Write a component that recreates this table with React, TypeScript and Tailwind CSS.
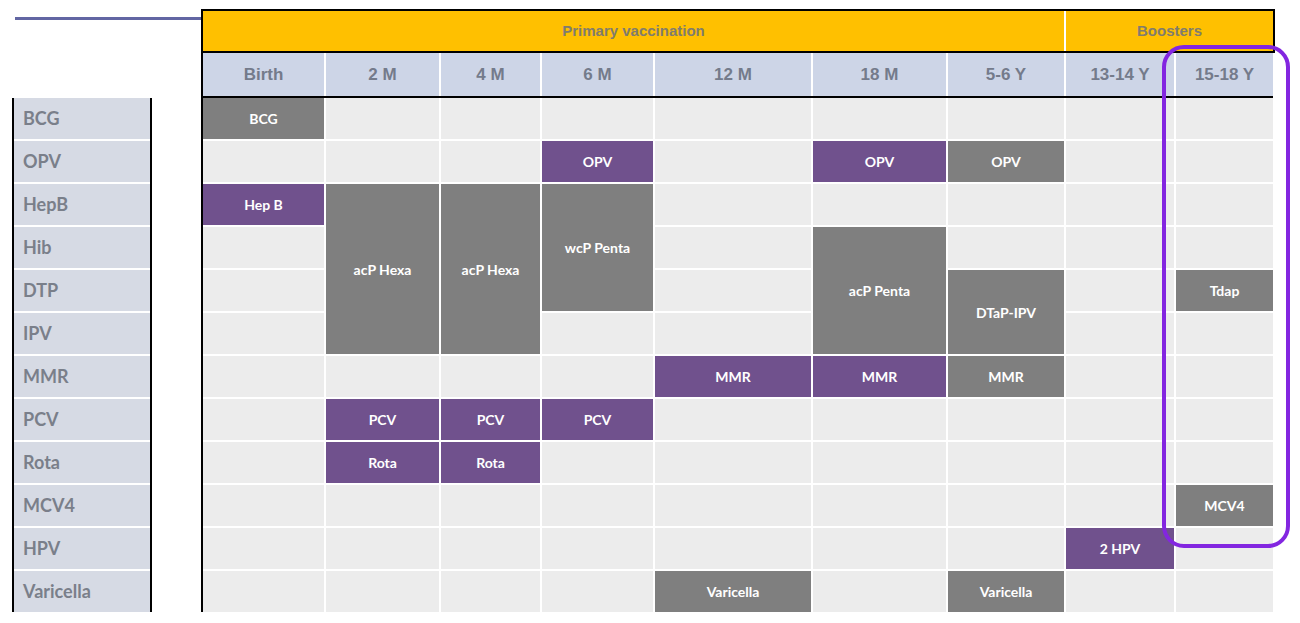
import React from 'react';

const columns = ['Birth', '2 M', '4 M', '6 M', '12 M', '18 M', '5-6 Y', '13-14 Y', '15-18 Y'];
const vaccines = ['BCG', 'OPV', 'HepB', 'Hib', 'DTP', 'IPV', 'MMR', 'PCV', 'Rota', 'MCV4', 'HPV', 'Varicella'];

const colStart = [
  'col-start-1', 'col-start-2', 'col-start-3', 'col-start-4', 'col-start-5',
  'col-start-6', 'col-start-7', 'col-start-8', 'col-start-9',
];
const rowStart = [
  'row-start-1', 'row-start-2', 'row-start-3', 'row-start-4', 'row-start-5', 'row-start-6',
  'row-start-7', 'row-start-8', 'row-start-9', 'row-start-10', 'row-start-11', 'row-start-12',
];

type Dose = { col: number; row: number; span?: string; label: string; purple?: boolean };

const doses: Dose[] = [
  { col: 1, row: 1, label: 'BCG' },
  { col: 4, row: 2, label: 'OPV', purple: true },
  { col: 6, row: 2, label: 'OPV', purple: true },
  { col: 7, row: 2, label: 'OPV' },
  { col: 1, row: 3, label: 'Hep B', purple: true },
  { col: 2, row: 3, span: 'row-span-4', label: 'acP Hexa' },
  { col: 3, row: 3, span: 'row-span-4', label: 'acP Hexa' },
  { col: 4, row: 3, span: 'row-span-3', label: 'wcP Penta' },
  { col: 6, row: 4, span: 'row-span-3', label: 'acP Penta' },
  { col: 7, row: 5, span: 'row-span-2', label: 'DTaP-IPV' },
  { col: 9, row: 5, label: 'Tdap' },
  { col: 5, row: 7, label: 'MMR', purple: true },
  { col: 6, row: 7, label: 'MMR', purple: true },
  { col: 7, row: 7, label: 'MMR' },
  { col: 2, row: 8, label: 'PCV', purple: true },
  { col: 3, row: 8, label: 'PCV', purple: true },
  { col: 4, row: 8, label: 'PCV', purple: true },
  { col: 2, row: 9, label: 'Rota', purple: true },
  { col: 3, row: 9, label: 'Rota', purple: true },
  { col: 9, row: 10, label: 'MCV4' },
  { col: 8, row: 11, label: '2 HPV', purple: true },
  { col: 5, row: 12, label: 'Varicella' },
  { col: 7, row: 12, label: 'Varicella' },
];

const cols = 'grid-cols-[121px_113px_99px_111px_156px_133px_116px_108px_97px]';

export default function App() {
  return (
    <div className="relative w-[1300px] h-[623px] bg-white flex pt-[9px] overflow-hidden">
      {/* left: rule + vaccine labels */}
      <div className="w-[201px] shrink-0 flex flex-col">
        <div className="mt-[8px] ml-[15px] h-[3px] bg-[#6266a3]" />
        <div className="mt-[78px] ml-[12px] w-[140px] border-x-2 border-black grid grid-rows-[repeat(12,41px)] gap-y-[2px] bg-white">
          {vaccines.map((v) => (
            <div
              key={v}
              className="bg-[#d6dae4] flex items-center pl-[9px] text-[18px] font-bold text-[#7a7f8a] font-['Lato',sans-serif]"
            >
              {v}
            </div>
          ))}
        </div>
      </div>

      {/* schedule table */}
      <div className="flex flex-col border-l-2 border-black h-[603px] font-['Liberation_Sans',Arial,sans-serif]">
        <div className={`grid ${cols} gap-x-[2px] bg-white h-[44px] w-[1072px] border-y-2 border-r-2 border-black`}>
          <div className="col-span-7 bg-[#ffc000] flex items-center justify-center text-[15px] font-bold text-[#807c6e]">
            Primary vaccination
          </div>
          <div className="col-span-2 bg-[#ffc000] flex items-center justify-center text-[15px] font-bold text-[#807c6e]">
            Boosters
          </div>
        </div>

        <div className={`grid ${cols} gap-x-[2px] bg-white h-[45px] w-[1070px] border-b-2 border-black`}>
          {columns.map((c) => (
            <div key={c} className="bg-[#cdd5e7] flex items-center justify-center text-[17px] font-bold text-[#747b8b]">
              {c}
            </div>
          ))}
        </div>

        <div className={`grid ${cols} grid-rows-[repeat(12,41px)] gap-[2px] bg-white w-[1070px] font-['Lato',sans-serif]`}>
          {vaccines.map((v, r) =>
            columns.map((c, ci) => (
              <div key={`${v}-${c}`} className={`${colStart[ci]} ${rowStart[r]} bg-[#ececec]`} />
            ))
          )}
          {doses.map((d, i) => (
            <div
              key={i}
              className={`${colStart[d.col - 1]} ${rowStart[d.row - 1]} ${d.span ?? ''} ${
                d.purple ? 'bg-[#70518d]' : 'bg-[#7f7f7f]'
              } flex items-center justify-center text-white text-[14px] font-bold`}
            >
              {d.label}
            </div>
          ))}
        </div>
      </div>

      {/* highlight around the adolescent boosters */}
      <div className="absolute left-[1162px] top-[45px] w-[128px] h-[503px] border-4 border-[#8326e0] rounded-[22px] pointer-events-none" />
    </div>
  );
}
